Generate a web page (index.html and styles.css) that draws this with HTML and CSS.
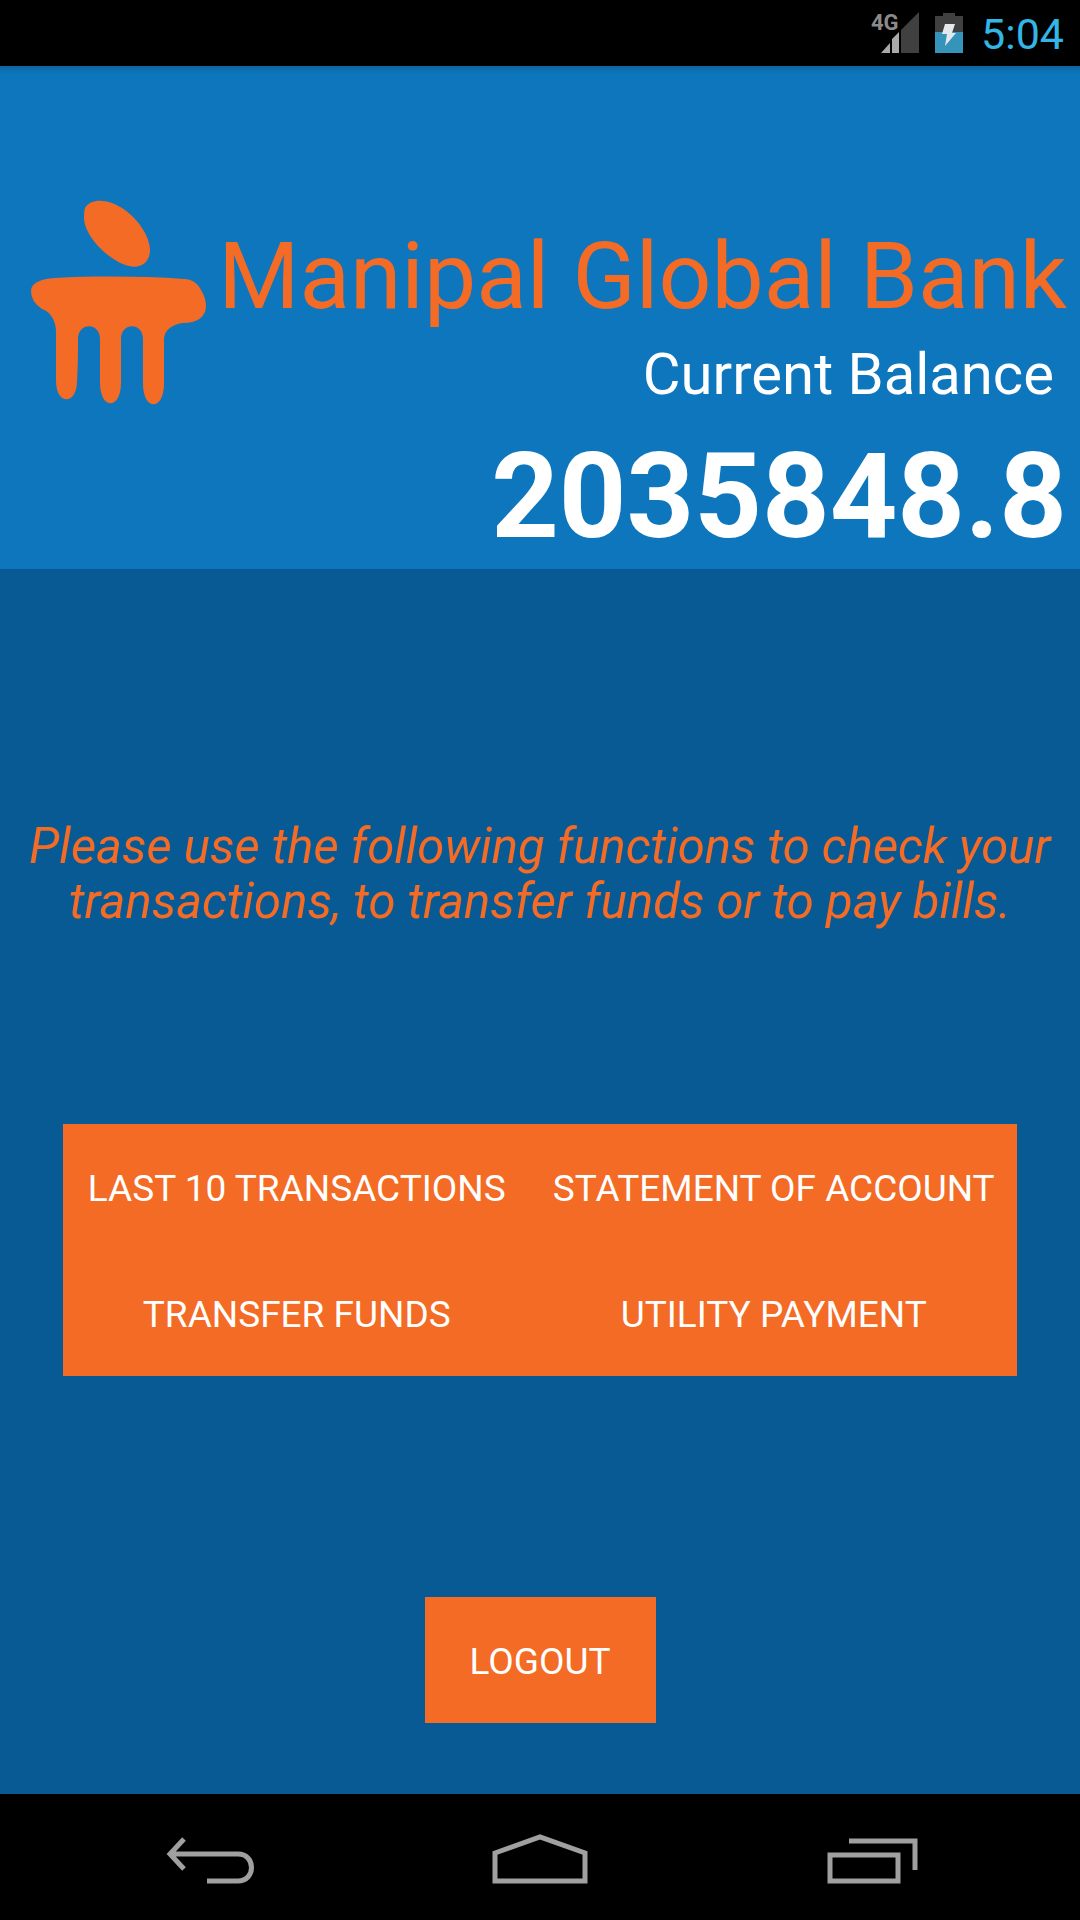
FILE: index.html
```html
<!DOCTYPE html>
<html lang="en">
<head>
<meta charset="utf-8">
<meta name="viewport" content="width=device-width, initial-scale=1">
<title>Manipal Global Bank</title>
<link rel="stylesheet" href="styles.css">
</head>
<body>
<div class="status-bar">
  <svg class="signal" viewBox="0 0 50 44" role="img" aria-label="4G signal">
    <text class="signal-label" x="0" y="19">4G</text>
    <path fill="#404040" d="M30 42V19L48 1v41z"/>
    <path fill="#a9a9a9" d="M21 42V28l7-7v21zM10 42l9-10v10z"/>
  </svg>
  <svg class="battery" viewBox="0 0 28 42" role="img" aria-label="Battery charging">
    <path fill="#404040" d="M8 1h12v3h8v16H0V4h8z"/>
    <path fill="#3694bb" d="M0 20h28v21H0z"/>
    <path fill="#e4e8ea" d="M10 12h10l-3 9h4L10 34l2-12H7z"/>
  </svg>
  <time class="clock">5:04</time>
</div>
<header class="header">
  <svg class="logo" viewBox="0 0 176 206" role="img" aria-label="Manipal logo">
    <path fill="#f36b25" d="M54 8C60-2 77-2 94 10C109 21 119 38 119 50C119 62 110 69 98 66C77 61 53 35 53 18Q53 11 54 8Z"/>
    <path fill="#f36b25" d="M24 78C62 76 112 76 153 79C162 79 167 84 170 90Q175 98 175 106C175 117 166 123 152 123C142 124 133 130 133 139V184C133 211 112 211 112 184V139C112 122 90 122 90 139V183C90 210 69 210 69 183V139C69 122 47 122 47 139C47 157 47 164 46 183C45 205 25 205 25 181V130C24 117 17 111 11 109Q0 102 0 91C0 83 9 79 24 78Z"/>
  </svg>
  <div class="summary">
    <h1 class="bank-name">Manipal Global Bank</h1>
    <p class="balance-label">Current Balance</p>
    <p class="balance">2035848.8</p>
  </div>
</header>
<main class="main">
  <p class="message">Please use the following functions to check your transactions, to transfer funds or to pay bills.</p>
  <div class="actions">
    <button class="button" type="button">LAST 10 TRANSACTIONS</button>
    <button class="button" type="button">STATEMENT OF ACCOUNT</button>
    <button class="button" type="button">TRANSFER FUNDS</button>
    <button class="button" type="button">UTILITY PAYMENT</button>
  </div>
  <button class="button logout" type="button">LOGOUT</button>
</main>
<nav class="nav-bar" aria-label="System">
  <button class="nav-button" type="button" aria-label="Back">
    <svg class="nav-icon" viewBox="0 0 100 60"><path d="M25 7L11 22l14 15M11 22H79c18 0 18 27 0 27H48"/></svg>
  </button>
  <button class="nav-button" type="button" aria-label="Home">
    <svg class="nav-icon" viewBox="0 0 100 60"><path d="M5 21L50 5l45 16v28H5z"/></svg>
  </button>
  <button class="nav-button" type="button" aria-label="Recent apps">
    <svg class="nav-icon" viewBox="0 0 100 60"><path d="M9 23h68v26H9zM28 9h66v29"/></svg>
  </button>
</nav>
</body>
</html>
```
FILE: styles.css
```css
* {
  box-sizing: border-box;
}

body {
  display: flex;
  flex-direction: column;
  min-height: 100vh;
  margin: 0;
  background: #085a95;
  color: #fff;
  font-family: Roboto, "Liberation Sans", sans-serif;
}

h1,
p {
  margin: 0;
  font-weight: 400;
}

button {
  border: 0;
  font-family: inherit;
  cursor: pointer;
}

.status-bar {
  display: flex;
  align-items: center;
  justify-content: flex-end;
  height: 66px;
  padding-right: 16px;
  background: #000;
}

.signal {
  width: 50px;
  height: 44px;
  margin-right: 14px;
}

.signal-label {
  fill: #8a8a8a;
  font-size: 22px;
  font-weight: 700;
}

.battery {
  width: 28px;
  height: 42px;
  margin-right: 18px;
}

.clock {
  padding-top: 2px;
  color: #33b5e5;
  font-size: 43px;
  line-height: 64px;
}

.header {
  display: flex;
  align-items: flex-start;
  justify-content: space-between;
  padding: 134px 13px 7px 31px;
  background: linear-gradient(#0c65a1, #0e76bc 8px);
}

.logo {
  flex: none;
  width: 176px;
  height: 206px;
}

.summary {
  padding-top: 22px;
  text-align: right;
}

.bank-name {
  color: #f36b25;
  font-size: 93px;
  line-height: 110px;
  white-space: nowrap;
}

.balance-label {
  padding: 0 13px;
  font-size: 58px;
  line-height: 84px;
}

.balance {
  margin-top: 17px;
  font-size: 118px;
  font-weight: 700;
  line-height: 129px;
}

.main {
  display: flex;
  flex: 1;
  flex-direction: column;
  align-items: center;
  padding: 250px 26px 71px;
}

.message {
  color: #f36b25;
  font-size: 49px;
  font-style: italic;
  line-height: 55px;
  text-align: center;
}

.actions {
  display: grid;
  grid-template-columns: 49fr 51fr;
  align-self: stretch;
  margin: 195px 37px 0;
  background: #f36b25;
}

.button {
  height: 126px;
  padding: 2px 8px 0;
  background: #f36b25;
  color: #fff;
  font-size: 37px;
}

.logout {
  min-width: 231px;
  margin-top: auto;
}

.nav-bar {
  display: flex;
  justify-content: space-around;
  height: 126px;
  padding: 0 44px;
  background: #000;
}

.nav-button {
  flex: 1;
  padding: 13px 0 0;
  background: none;
}

.nav-icon {
  width: 100px;
  height: 60px;
  fill: none;
  stroke: #a0a0a0;
  stroke-width: 5;
}
```
